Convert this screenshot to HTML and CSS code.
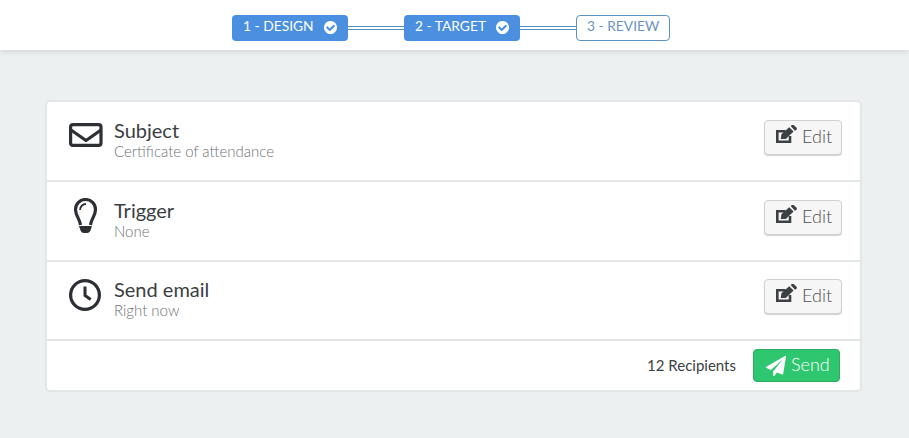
FILE: index.html
```html
<!DOCTYPE html>
<html lang="en">
<head>
<meta charset="utf-8">
<title>Review</title>
<link rel="stylesheet" href="styles.css">
</head>
<body>
<header class="topbar">
  <div class="step step-done">1 - DESIGN
    <svg class="check" viewBox="128 128 1536 1536"><path d="M1412 734q0-28-18-46l-91-90q-19-19-45-19t-45 19l-408 407-226-226q-19-19-45-19t-45 19l-91 90q-18 18-18 46 0 27 18 45l362 362q19 19 45 19 27 0 46-19l543-543q18-18 18-45zm252 162q0 209-103 385.500t-279.500 279.500-385.500 103-385.500-103-279.500-279.500-103-385.500 103-385.500 279.500-279.500 385.500-103 385.500 103 279.500 279.500 103 385.500z"/></svg>
  </div>
  <div class="link"></div>
  <div class="step step-done">2 - TARGET
    <svg class="check" viewBox="128 128 1536 1536"><path d="M1412 734q0-28-18-46l-91-90q-19-19-45-19t-45 19l-408 407-226-226q-19-19-45-19t-45 19l-91 90q-18 18-18 46 0 27 18 45l362 362q19 19 45 19 27 0 46-19l543-543q18-18 18-45zm252 162q0 209-103 385.500t-279.500 279.500-385.500 103-385.500-103-279.500-279.500-103-385.500 103-385.500 279.500-279.500 385.500-103 385.500 103 279.500 279.500 103 385.500z"/></svg>
  </div>
  <div class="link"></div>
  <div class="step step-todo">3 - REVIEW</div>
</header>

<main class="card">
  <section class="row">
    <svg class="row-icon" viewBox="0 0 34 40"><rect x="1.600" y="6.600" width="30.400" height="20.800" rx="2.500" class="line"/><path d="M2 12 L17 22.500 L32 12" class="line"/></svg>
    <div class="row-text">
      <div class="row-title">Subject</div>
      <div class="row-sub">Certificate of attendance</div>
    </div>
    <button class="btn-edit"><svg class="edit-icon" viewBox="0 0 21 20"><path d="M14 11 V16.700 H1.300 V6.300 H9.500" class="edit-box"/><path d="M4.800 14 L5.400 9.200 L13.200 2.200 L17.600 6.600 L9.800 14 Z M14.600 1 L16 0 H17.600 L20.800 3 V4.600 L19 5.800 Z"/></svg>Edit</button>
  </section>
  <section class="row">
    <svg class="row-icon" viewBox="0 0 34 40"><path d="M11.500 27 C11 21 6.500 18 6.500 11.500 A10 10 0 0 1 26.500 11.500 C26.500 18 22 21 21.500 27" class="line"/><path d="M11 12 A6 6 0 0 1 17 6" class="thin"/><path d="M10 28 H23 L22 31 Q21 35 18 35 H15 Q12 35 11 31 Z" class="solid"/></svg>
    <div class="row-text">
      <div class="row-title">Trigger</div>
      <div class="row-sub">None</div>
    </div>
    <button class="btn-edit"><svg class="edit-icon" viewBox="0 0 21 20"><path d="M14 11 V16.700 H1.300 V6.300 H9.500" class="edit-box"/><path d="M4.800 14 L5.400 9.200 L13.200 2.200 L17.600 6.600 L9.800 14 Z M14.600 1 L16 0 H17.600 L20.800 3 V4.600 L19 5.800 Z"/></svg>Edit</button>
  </section>
  <section class="row row-last">
    <svg class="row-icon" viewBox="0 0 34 40"><circle cx="16" cy="18" r="14.400" class="line"/><path d="M16 9.500 V18.500 L21.700 22.500" class="hand"/></svg>
    <div class="row-text">
      <div class="row-title">Send email</div>
      <div class="row-sub">Right now</div>
    </div>
    <button class="btn-edit"><svg class="edit-icon" viewBox="0 0 21 20"><path d="M14 11 V16.700 H1.300 V6.300 H9.500" class="edit-box"/><path d="M4.800 14 L5.400 9.200 L13.200 2.200 L17.600 6.600 L9.800 14 Z M14.600 1 L16 0 H17.600 L20.800 3 V4.600 L19 5.800 Z"/></svg>Edit</button>
  </section>
  <footer class="foot">
    <span class="recipients">12 Recipients</span>
    <button class="btn-send"><svg class="send-icon" viewBox="0 0 1792 1792"><path d="M1764 11q33 24 27 64l-256 1536q-5 29-32 45-14 8-31 8-11 0-24-5l-453-185-242 295q-18 23-49 23-13 0-22-4-19-7-30.500-23.500t-11.500-36.500v-349l864-1059-1069 925-395-162q-37-14-40-55-2-40 32-59l1664-960q15-9 32-9 20 0 36 11z"/></svg>Send</button>
  </footer>
</main>
</body>
</html>
```

FILE: styles.css
```css
* { box-sizing: border-box; }
html, body { margin: 0; height: 100%; }
body {
  background: #ecf0f1;
  font-family: Lato, "Open Sans", sans-serif;
  color: #34383c;
  overflow: hidden;
}
.topbar {
  height: 50px;
  background: #fff;
  box-shadow: 0 2px 5px rgba(0, 0, 0, .1);
  display: flex;
  align-items: flex-start;
  padding: 15px 0 0 232px;
}
.step {
  height: 26px;
  width: 116px;
  border-radius: 4px;
  font-size: 13.800px;
  line-height: 22px;
  display: flex;
  align-items: flex-start;
  padding-left: 11px;
  white-space: pre;
}
.step-done {
  background: #4a8fe0;
  color: #fff;
}
.step-todo {
  width: 94px;
  background: #fff;
  border: 1px solid #5b93c4;
  color: #6b94c4;
  padding-left: 10px;
  line-height: 20px;
}
.check {
  width: 13px;
  height: 13px;
  fill: #fff;
  margin: 6px 0 0 10px;
  flex: none;
}
.link {
  width: 56px;
  height: 4px;
  margin-top: 11px;
  border-top: 1px solid #4d8fc0;
  border-bottom: 1px solid #4d8fc0;
}
.card {
  position: absolute;
  left: 45px;
  top: 100px;
  width: 817px;
  height: 292px;
  background: #fff;
  border: 2px solid #e2e6e7;
  border-radius: 5px;
}
.row {
  height: 80px;
  border-bottom: 2px solid #e2e6e7;
  display: flex;
  align-items: flex-start;
  padding: 16px 18px 0 22px;
}
.row-last {
  height: 79px;
  padding-top: 15px;
}
.row-icon {
  width: 34px;
  height: 40px;
  flex: none;
  fill: none;
}
.line { fill: none; stroke: #2c3035; stroke-width: 3.200; stroke-linejoin: round; }
.thin { fill: none; stroke: #2c3035; stroke-width: 1.800; }
.solid { fill: #2c3035; }
.hand { fill: none; stroke: #2c3035; stroke-width: 3; stroke-linejoin: round; }
.row-text { margin-left: 11px; flex: 1; }
.row-title {
  font-size: 20px;
  line-height: 24px;
  color: #3a3e42;
}
.row-sub {
  font-size: 15px;
  font-weight: 300;
  line-height: 18px;
  color: #6e7276;
}
.btn-edit {
  width: 78px;
  height: 35px;
  margin-top: 2px;
  background: #f6f6f6;
  border: 1px solid #cfd1d2;
  border-radius: 4px;
  box-shadow: 0 1px 1px rgba(0, 0, 0, .18);
  font: 300 18px Lato, sans-serif;
  color: #4e4e4e;
  display: flex;
  align-items: center;
  padding: 0 0 4px 11px;
}
.edit-icon { width: 21px; height: 20px; fill: #3c3f43; margin: 0 5px 1px 0; flex: none; }
.edit-box { fill: none; stroke: #3c3f43; stroke-width: 2.600; }
.foot {
  height: 49px;
  display: flex;
  align-items: center;
  justify-content: flex-end;
  padding-right: 20px;
}
.recipients { font-size: 15px; color: #3c4043; margin: 0 17px 2px 0; }
.btn-send {
  width: 87px;
  height: 33px;
  background: #2fc670;
  border: 1px solid #28ad62;
  border-radius: 4px;
  font: 300 18px Lato, sans-serif;
  color: #fff;
  display: flex;
  align-items: center;
  padding: 0 0 4px 12px;
}
.send-icon { width: 20px; height: 20px; fill: #fff; margin: 5px 5px 0 0; flex: none; }
```
